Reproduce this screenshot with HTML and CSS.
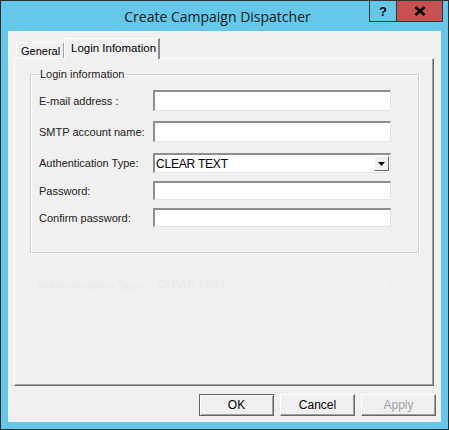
FILE: index.html
```html
<!DOCTYPE html>
<html>
<head>
<meta charset="utf-8">
<link rel="stylesheet" href="styles.css">
</head>
<body>
<div class="window">
  <div class="titlebar">
    <div class="title">Create Campaign Dispatcher</div>
    <div class="caption-btns">
      <div class="cap help">?</div>
      <div class="cap close">
        <svg width="12" height="10" viewBox="0 0 12 10"><path d="M1.5 1 L10.5 9 M10.5 1 L1.5 9" stroke="#000" stroke-width="2.6" fill="none"/></svg>
      </div>
    </div>
  </div>
  <div class="client">
    <div class="tabctl">
      <div class="tabstrip">
        <div class="tab">General</div>
        <div class="tab active">Login Infomation</div>
      </div>
      <div class="panel">
        <fieldset class="group">
          <legend>Login information</legend>
          <div class="row r1"><span class="lbl">E-mail address :</span><div class="input"></div></div>
          <div class="row r2"><span class="lbl">SMTP account name:</span><div class="input"></div></div>
          <div class="row r3"><span class="lbl">Authentication Type:</span><div class="input combo"><span class="val">CLEAR TEXT</span><span class="drop"><svg width="7" height="4" viewBox="0 0 7 4"><path d="M0 0 H7 L3.5 4 Z" fill="#000"/></svg></span></div></div>
          <div class="row r4"><span class="lbl">Password:</span><div class="input"></div></div>
          <div class="row r5"><span class="lbl">Confirm password:</span><div class="input"></div></div>
        </fieldset>
        <div class="ghost"><span class="lbl">Authentication Type:</span><div class="gbox">CLEAR TEXT</div></div>
      </div>
    </div>
    <div class="buttons">
      <div class="btn default">OK</div>
      <div class="btn">Cancel</div>
      <div class="btn disabled">Apply</div>
    </div>
  </div>
</div>
</body>
</html>
```
FILE: styles.css
```css
html, body {
  margin: 0;
  padding: 0;
  background: #65c8e9;
}
.window {
  position: relative;
  width: 449px;
  height: 430px;
  box-sizing: border-box;
  border: 1px solid #2e2e2e;
  background: #65c8e9;
  display: flex;
  flex-direction: column;
}
.titlebar {
  height: 30px;
  flex: none;
  display: flex;
  align-items: center;
  justify-content: center;
  padding-right: 14px;
}
.title {
  font-family: "Open Sans", "Noto Sans", sans-serif;
  font-size: 14px;
  color: #101820;
  margin-top: 1px;
}
.caption-btns {
  position: absolute;
  top: -1px;
  right: 5px;
  display: flex;
}
.cap {
  height: 20px;
  border: 1px solid #363636;
  display: flex;
  align-items: center;
  justify-content: center;
  box-sizing: content-box;
}
.help {
  width: 26px;
  border-right: none;
  font-family: "Liberation Sans", Arial, sans-serif;
  font-weight: bold;
  font-size: 13px;
  color: #000;
}
.close {
  width: 45px;
  background: #c75050;
}
.client {
  flex: 1;
  margin: 0 7px 7px 7px;
  background: #f0f0f0;
  display: flex;
  flex-direction: column;
  padding-top: 7px;
  font-family: "Liberation Sans", Arial, sans-serif;
  font-size: 11px;
  color: #000;
}
.tabctl {
  margin-left: 6px;
  width: 420px;
  display: flex;
  flex-direction: column;
}
.tabstrip {
  height: 20px;
  display: flex;
  align-items: flex-end;
  padding-left: 2px;
  position: relative;
  z-index: 1;
}
.tab {
  box-sizing: border-box;
  height: 16px;
  width: 48px;
  border-top: 1px solid #fff;
  border-left: 1px solid #fff;
  border-right: 1px solid #a0a0a0;
  padding-left: 4px;
  padding-top: 2px;
  line-height: 12px;
}
.tab.active {
  height: 21px;
  width: 96px;
  margin-bottom: -1px;
  background: #f0f0f0;
  border-right: 2px solid #8a8a8a;
  padding-left: 6px;
  padding-top: 3px;
  font-size: 11.5px;
}
.panel {
  box-sizing: border-box;
  height: 328px;
  border-top: 1px solid #fff;
  border-left: 1px solid #fff;
  border-right: 1px solid #696969;
  border-bottom: 1px solid #696969;
  box-shadow: inset -1px -1px 0 #a0a0a0;
  padding-left: 15px;
  padding-top: 8px;
}
.group {
  box-sizing: border-box;
  width: 389px;
  height: 186px;
  margin: 0;
  padding: 0 0 0 8px;
  border: 1px solid #d0d0d0;
  box-shadow: inset 1px 1px 0 #fff, 1px 1px 0 #fff;
}
.group legend {
  padding: 0 2px 0 1px;
  margin-left: 0;
  line-height: 14px;
  color: #222;
}
.row {
  display: flex;
  align-items: center;
}
.lbl {
  width: 114px;
  flex: none;
  color: #222;
}
.input {
  box-sizing: border-box;
  width: 238px;
  height: 21px;
  background: #fff;
  border-top: 2px solid #8e8e8e;
  border-left: 2px solid #8e8e8e;
  border-right: 1px solid #e4e4e4;
  border-bottom: 1px solid #e4e4e4;
}
.r1 { margin-top: 9px; }
.r2 { margin-top: 10px; }
.r3 { margin-top: 11px; }
.r3 .input { height: 20px; }
.r4 { margin-top: 8px; }
.r4 .input { height: 19px; }
.r5 { margin-top: 8px; }
.r5 .input { height: 19px; }
.combo {
  display: flex;
  align-items: center;
  justify-content: space-between;
  font-size: 12px;
  padding-left: 1px;
  padding-right: 1px;
}
.combo .val {
  letter-spacing: -0.2px;
}
.drop {
  width: 15px;
  height: 15px;
  box-sizing: border-box;
  background: #f0f0f0;
  border-top: 1px solid #fff;
  border-left: 1px solid #fff;
  border-right: 1px solid #696969;
  border-bottom: 1px solid #696969;
  display: flex;
  align-items: center;
  justify-content: center;
}
.ghost {
  display: flex;
  align-items: center;
  margin-top: 24px;
  margin-left: 7px;
  opacity: 0.025;
}
.ghost .lbl { width: 115px; font-weight: bold; }
.gbox {
  width: 238px;
  height: 16px;
  border: 1px solid #888;
  font-weight: bold;
  padding-left: 4px;
  box-sizing: border-box;
}
.buttons {
  display: flex;
  justify-content: flex-end;
  gap: 6px;
  padding-right: 5px;
  margin-top: 8px;
}
.btn {
  box-sizing: border-box;
  width: 75px;
  height: 22px;
  background: #f0f0f0;
  border-top: 1px solid #fff;
  border-left: 1px solid #fff;
  border-right: 1px solid #696969;
  border-bottom: 1px solid #696969;
  box-shadow: inset -1px -1px 0 #a0a0a0;
  display: flex;
  align-items: center;
  justify-content: center;
  font-size: 12px;
  color: #000;
}
.btn.default {
  border: 1px solid #646464;
  box-shadow: inset 1px 1px 0 #fff, inset -1px -1px 0 #a0a0a0;
}
.btn.disabled {
  color: #a0a0a0;
}
```
